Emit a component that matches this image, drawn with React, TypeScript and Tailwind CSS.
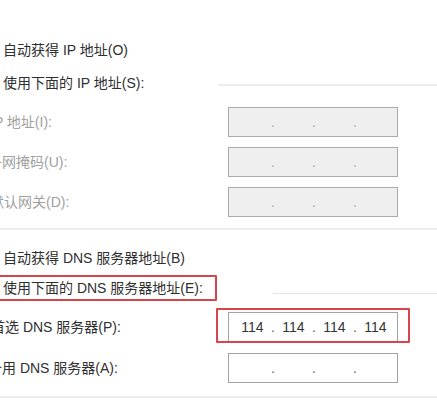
import React from 'react';

// IPv4 地址输入框：四段数字 + 三个点
const IpBox: React.FC<{ parts?: string[]; disabled?: boolean }> = ({ parts = ['', '', '', ''], disabled }) => (
  <div
    className={`w-[170px] h-[30px] shrink-0 flex items-center pl-[5px] border ${
      disabled ? 'bg-[#efefef] border-[#ababab]' : 'bg-white border-[#a3a3a3]'
    }`}
  >
    {parts.map((p, i) => (
      <React.Fragment key={i}>
        <span className="w-[37px] text-center text-[14px] font-medium text-[#333]">{p}</span>
        {i < 3 && (
          <span
            className={`w-[4px] text-center text-[14px] leading-none ${
              disabled ? 'text-[#a8a8a8]' : 'text-[#666]'
            }`}
          >
            .
          </span>
        )}
      </React.Fragment>
    ))}
  </div>
);

const FieldRow: React.FC<{ label: string; disabled?: boolean; parts?: string[]; indent: string }> = ({
  label,
  disabled,
  parts,
  indent,
}) => (
  <div className="flex items-center h-[30px]">
    <div className={`${indent} whitespace-nowrap ${disabled ? 'text-[#a0a0a0]' : 'text-[#2f2f2f]'}`}>{label}</div>
    <IpBox parts={parts} disabled={disabled} />
  </div>
);

const App: React.FC = () => {
  return (
    <div
      className="relative w-[437px] h-[400px] overflow-hidden bg-white text-[14px] leading-[20px] text-[#2f2f2f]"
      style={{ fontFamily: '"Liberation Sans", "Noto Sans CJK SC", sans-serif' }}
    >
      <div className="flex flex-col pt-[40px]">
        {/* IP 部分 */}
        <div className="h-[20px] pl-[3px] whitespace-nowrap">自动获得 IP 地址(O)</div>
        <div className="mt-[13px] h-[20px] flex items-center">
          <span className="pl-[3px] whitespace-nowrap">使用下面的 IP 地址(S):</span>
          <div className="ml-auto mt-[3px] w-[219px] h-[2px] bg-[#ededed]" />
        </div>

        <div className="mt-[14px] flex flex-col gap-[10px]">
          <FieldRow label="IP 地址(I):" disabled indent="w-[238px] -ml-[10px]" />
          <FieldRow label="子网掩码(U):" disabled indent="w-[240px] -ml-[12px]" />
          <FieldRow label="默认网关(D):" disabled indent="w-[238px] -ml-[10px]" />
        </div>

        <div className="mt-[11px] h-[2px] bg-[#ececec]" />

        {/* DNS 部分 */}
        <div className="mt-[18px] h-[20px] pl-[3px] whitespace-nowrap">自动获得 DNS 服务器地址(B)</div>
        <div className="mt-[10px] h-[20px] flex items-end">
          <span className="pl-[3px] self-center whitespace-nowrap">使用下面的 DNS 服务器地址(E):</span>
          <div className="ml-auto mb-[4px] w-[164px] h-[1px] bg-[#e2e2e2]" />
        </div>

        <div className="mt-[14px]">
          <FieldRow label="首选 DNS 服务器(P):" parts={['114', '114', '114', '114']} indent="w-[237px] -ml-[9px]" />
        </div>
        <div className="mt-[11px]">
          <FieldRow label="备用 DNS 服务器(A):" indent="w-[240px] -ml-[12px]" />
        </div>

        <div className="mt-[13px] h-[2px] bg-[#ededed]" />
      </div>

      {/* 红色标注框 */}
      <div className="absolute left-[-6px] top-[275px] w-[223px] h-[26px] border-2 border-[#d8444c] rounded-[1px]" />
      <div className="absolute left-[216px] top-[308px] w-[194px] h-[35px] border-2 border-[#d8444c] rounded-[1px]" />
    </div>
  );
};

export default App;
